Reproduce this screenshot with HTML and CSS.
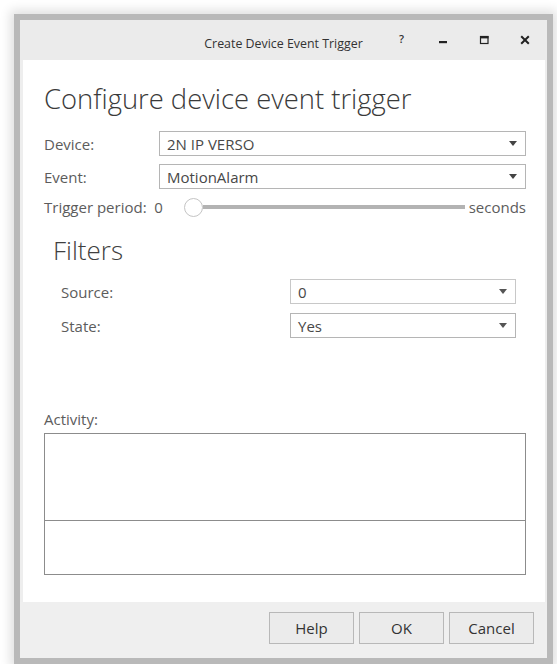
FILE: index.html
```html
<!DOCTYPE html>
<html lang="en">
<head>
<meta charset="utf-8">
<title>Create Device Event Trigger</title>
<link rel="stylesheet" href="styles.css">
</head>
<body>
<div class="window">
  <div class="titlebar">
    <span class="title">Create Device Event Trigger</span>
    <div class="controls">
      <span class="ctl ctl-help">?</span>
      <span class="ctl"><svg width="10" height="10" viewBox="0 0 10 10"><rect x="1" y="6" width="8" height="2.2" fill="#222"/></svg></span>
      <span class="ctl"><svg width="10" height="10" viewBox="0 0 10 10"><rect x="1.5" y="1.5" width="7.5" height="7" fill="none" stroke="#222" stroke-width="1.2"/><rect x="1" y="1" width="8.5" height="2.4" fill="#222"/></svg></span>
      <span class="ctl"><svg width="10" height="10" viewBox="0 0 10 10"><path d="M1.2 1.2 L8.8 8.8 M8.8 1.2 L1.2 8.8" stroke="#222" stroke-width="2"/></svg></span>
    </div>
  </div>

  <div class="client">
    <h1 class="heading">Configure device event trigger</h1>

    <div class="form">
      <span class="label">Device:</span>
      <div class="combo"><span>2N IP VERSO</span><svg class="arrow" width="8" height="5" viewBox="0 0 8 5"><path d="M0 0 H8 L4 5 Z" fill="#444"/></svg></div>
      <span class="label">Event:</span>
      <div class="combo"><span>MotionAlarm</span><svg class="arrow" width="8" height="5" viewBox="0 0 8 5"><path d="M0 0 H8 L4 5 Z" fill="#444"/></svg></div>
    </div>

    <div class="slider-row">
      <span class="label">Trigger period:&nbsp; 0</span>
      <div class="slider">
        <span class="thumb"></span>
        <span class="track"></span>
      </div>
      <span class="label">seconds</span>
    </div>

    <h2 class="subheading">Filters</h2>

    <div class="filters">
      <span class="label">Source:</span>
      <div class="combo combo-light"><span>0</span><svg class="arrow" width="8" height="5" viewBox="0 0 8 5"><path d="M0 0 H8 L4 5 Z" fill="#555"/></svg></div>
      <span class="label">State:</span>
      <div class="combo"><span>Yes</span><svg class="arrow" width="8" height="5" viewBox="0 0 8 5"><path d="M0 0 H8 L4 5 Z" fill="#555"/></svg></div>
    </div>

    <div class="label activity-label">Activity:</div>
    <div class="activity">
      <div class="activity-top"></div>
      <div class="activity-bottom"></div>
    </div>
  </div>

  <div class="footer">
    <button class="btn">Help</button>
    <button class="btn">OK</button>
    <button class="btn">Cancel</button>
  </div>
</div>
</body>
</html>
```
FILE: styles.css
```css
* { box-sizing: border-box; }

html, body {
  margin: 0;
  padding: 0;
  background: #ffffff;
}

body {
  width: 557px;
  height: 664px;
  overflow: hidden;
  padding: 14px 0 0 14px;
  font-family: "Open Sans", "Noto Sans", sans-serif;
  color: #4a4a4a;
}

/* dialog frame */
.window {
  width: 539px;
  height: 650px;
  border: 6px solid #b9b9b9;
  background: #eeeeee;
  display: flex;
  flex-direction: column;
  box-shadow: 0 0 10px 4px rgba(0, 0, 0, 0.12);
}

.titlebar {
  height: 40px;
  flex: none;
  display: grid;
  grid-template-columns: 1fr auto 1fr;
  align-items: center;
  background: #ebebeb;
}

.title {
  grid-column: 2;
  font-size: 12.4px;
  color: #333;
  padding-top: 6px;
}

.controls {
  grid-column: 3;
  justify-self: end;
  display: flex;
  padding-right: 2px;
}

.ctl {
  width: 41px;
  height: 30px;
  display: flex;
  align-items: center;
  justify-content: center;
}

.ctl-help {
  font-size: 11px;
  font-weight: 600;
  color: #333;
  padding-bottom: 4px;
}

/* white client area */
.client {
  flex: 1;
  background: #ffffff;
  margin: 0 2px 0 3px;
  padding: 0 19px 0 21px;
  display: flex;
  flex-direction: column;
}

.heading {
  margin: 21px 0 0 0;
  font-size: 27.4px;
  line-height: 36px;
  font-weight: 300;
  color: #3a3a3a;
}

.label {
  font-size: 15px;
  line-height: 20px;
  color: #5c5c5c;
  white-space: nowrap;
}

.form {
  margin-top: 14px;
  display: grid;
  grid-template-columns: 115px 1fr;
  row-gap: 8px;
  align-items: center;
}

.combo {
  height: 25px;
  border: 1px solid #b5b5b5;
  background: #fff;
  display: flex;
  align-items: center;
  justify-content: space-between;
  padding: 0 8px 0 7px;
  font-size: 15px;
  color: #484848;
}

.combo-light { border-color: #c8c8c8; }

.arrow { flex: none; }

.slider-row {
  margin-top: 8px;
  height: 20px;
  display: flex;
  align-items: center;
}

.slider {
  flex: 1;
  display: flex;
  align-items: center;
  margin: 0 4px 0 21px;
}

.thumb {
  width: 19px;
  height: 19px;
  border-radius: 50%;
  border: 1px solid #c4c4c4;
  background: #fff;
  flex: none;
}

.track {
  flex: 1;
  height: 4px;
  background: #b3b3b3;
}

.subheading {
  margin: 16px 0 0 9px;
  font-size: 26px;
  line-height: 34px;
  font-weight: 300;
  color: #404040;
}

.filters {
  margin-top: 12px;
  padding: 0 10px 0 17px;
  display: grid;
  grid-template-columns: 229px 1fr;
  row-gap: 9px;
  align-items: center;
}

.activity-label {
  margin-top: 71px;
}

.activity {
  margin-top: 4px;
  height: 142px;
  border: 1px solid #8c8c8c;
  display: flex;
  flex-direction: column;
}

.activity-top {
  height: 87px;
  border-bottom: 1px solid #8c8c8c;
}

.activity-bottom { flex: 1; }

/* button strip */
.footer {
  height: 56px;
  flex: none;
  display: flex;
  justify-content: flex-end;
  align-items: flex-start;
  gap: 5px;
  padding: 10px 13px 0 0;
  background: #efefef;
}

.btn {
  width: 85px;
  height: 32px;
  border: 1px solid #b8b8b8;
  background: #ebebeb;
  font-family: "Open Sans", "Noto Sans", sans-serif;
  font-size: 15px;
  color: #333;
  padding: 0;
}
```
